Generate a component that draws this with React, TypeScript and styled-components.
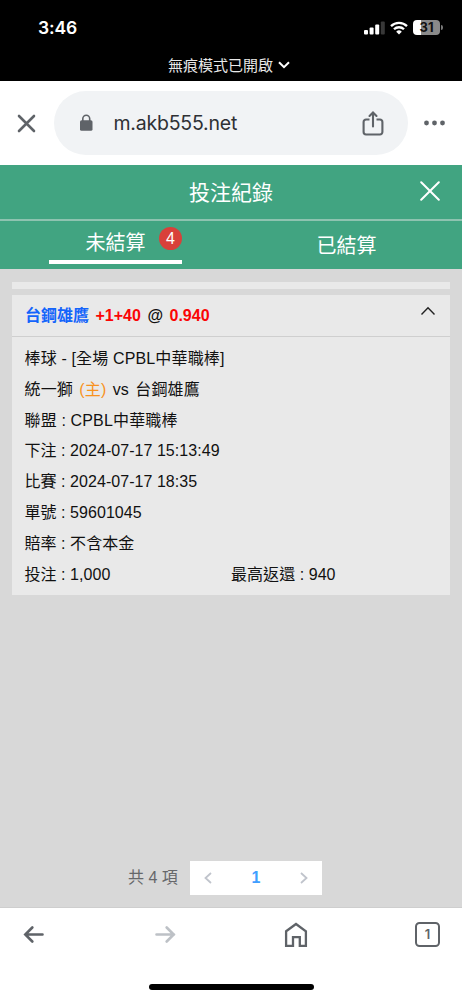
import React from 'react';
import styled, { createGlobalStyle } from 'styled-components';

const GlobalStyle = createGlobalStyle`
  * { box-sizing: border-box; }
  body { margin: 0; background: #fff; }
`;

const cjk = `'Noto Sans CJK TC', sans-serif`;

const Screen = styled.div`
  width: 462px;
  height: 1000px;
  display: flex;
  flex-direction: column;
  overflow: hidden;
  background: #fff;
  font-family: 'Liberation Sans', ${cjk};
`;

const TopArea = styled.header`
  height: 81px;
  flex: none;
  background: #000;
  color: #fff;
  display: flex;
  flex-direction: column;
`;

const StatusBar = styled.div`
  height: 55px;
  padding: 0 19px 0 38px;
  display: flex;
  align-items: center;
  justify-content: space-between;
`;

const Clock = styled.span`
  font: 600 17.5px/24px Inter, sans-serif;
  letter-spacing: -0.1px;
`;

const StatusIcons = styled.div`
  display: flex;
  align-items: center;
  gap: 5px;
`;

const Battery = styled.div`
  display: flex;
  align-items: center;
  gap: 1px;
`;

const BatteryBody = styled.div<{ $level: number }>`
  width: 27px;
  height: 15px;
  border-radius: 4px;
  background: linear-gradient(90deg, #fff ${p => p.$level}%, #8a8a8a ${p => p.$level}%);
  color: #111;
  font: 700 13px/15px Inter, sans-serif;
  text-align: center;
`;

const BatteryTip = styled.div`
  width: 2px;
  height: 5px;
  border-radius: 0 2px 2px 0;
  background: #777;
`;

const Incognito = styled.div`
  height: 20px;
  display: flex;
  align-items: center;
  justify-content: center;
  gap: 5px;
  padding-right: 4px;
  font: 400 15px/20px ${cjk};
  color: #e8e8e8;
`;

const AddressBar = styled.div`
  height: 84px;
  flex: none;
  display: flex;
  align-items: center;
  padding: 0 16px 0 17px;
`;

const AddressPill = styled.div`
  width: 354px;
  height: 64px;
  margin: 0 15px 0 18px;
  padding: 0 24px;
  border-radius: 32px;
  background: #f1f3f5;
  display: flex;
  align-items: center;
`;

const Url = styled.span`
  flex: 1;
  margin-left: 19.5px;
  font: 400 19.5px/28px Inter, sans-serif;
  letter-spacing: -0.22px;
  color: #2e3034;
`;

const TitleBar = styled.div`
  height: 56px;
  flex: none;
  display: grid;
  grid-template-columns: 44px 1fr 44px;
  align-items: center;
  padding: 0 10px 2px;
  background: #41a481;
  border-bottom: 2px solid #8ec3b0;
  color: #fff;
`;

const Title = styled.h1`
  grid-column: 2;
  margin: 0;
  text-align: center;
  font: 400 21px/30px ${cjk};
`;

const CloseButton = styled.button`
  display: flex;
  justify-content: center;
  padding: 0;
  border: 0;
  background: none;
`;

const Tabs = styled.nav`
  height: 48px;
  flex: none;
  display: grid;
  grid-template-columns: 231px 231px;
  justify-items: center;
  background: #41a481;
`;

const Tab = styled.div<{ $active?: boolean }>`
  position: relative;
  width: 133px;
  height: ${p => (p.$active ? 43 : 48)}px;
  border-bottom: ${p => (p.$active ? '4px solid #fff' : '0')};
  color: #fff;
  font: 400 20px/${p => (p.$active ? 41 : 47)}px ${cjk};
  text-align: center;
`;

const Badge = styled.span`
  position: absolute;
  top: 5.5px;
  right: 0;
  width: 23px;
  height: 23px;
  border-radius: 50%;
  background: #d9403a;
  font: 400 16px/23px 'Liberation Sans', sans-serif;
`;

const Content = styled.main`
  height: 639px;
  flex: none;
  padding: 13px 12px 0;
  background: #d8d8d8;
  border-bottom: 1px solid #cecece;
  display: flex;
  flex-direction: column;
`;

const Strip = styled.div`
  height: 7px;
  margin-bottom: 6px;
  background: #e9e9e9;
`;

const Card = styled.section`
  height: 300px;
  background: #e9e9e9;
  color: #111;
`;

const CardHeader = styled.div`
  height: 41.5px;
  padding: 0 14px 0 13px;
  display: flex;
  justify-content: space-between;
  border-bottom: 1px solid #cfcfcf;
`;

const BetSummary = styled.div`
  display: flex;
  align-items: baseline;
  gap: 6.5px;
  font-size: 16px;
  font-weight: 700;
  line-height: 38px;
  color: #fb0505;
`;

const Team = styled.span`
  font: 700 16px/38px ${cjk};
  color: #1464fb;
`;

const At = styled.span`
  color: #111;
`;

const Details = styled.div`
  padding: 7.5px 12.5px 0;
  font-size: 16px;
`;

const Row = styled.div<{ $loose?: boolean }>`
  height: 30.8px;
  line-height: 30.8px;
  display: grid;
  grid-template-columns: 206.5px 1fr;
  white-space: pre;
  letter-spacing: ${p => (p.$loose ? 0.15 : 0.05)}px;
`;

const Line = styled.span<{ $wide?: boolean }>`
  grid-column: ${p => (p.$wide ? '1 / 3' : 'auto')};
`;

const Matchup = styled(Line)`
  display: flex;
  gap: 6.3px;
`;

const HomeMark = styled.span`
  color: #f8921e;
`;

const Pagination = styled.div`
  margin-top: auto;
  padding-bottom: 12px;
  display: flex;
  align-items: center;
  padding-left: 116px;
`;

const Total = styled.span`
  width: 62px;
  font: 400 16px/34px 'Liberation Sans', ${cjk};
  color: #66676a;
`;

const Pager = styled.div`
  width: 132px;
  height: 34px;
  padding: 0 14px;
  display: flex;
  align-items: center;
  justify-content: space-between;
  background: #fff;
`;

const PageNumber = styled.span`
  color: #409eff;
  font-size: 16px;
  font-weight: 700;
`;

const BottomBar = styled.footer`
  flex: 1;
  display: flex;
  flex-direction: column;
  align-items: center;
  justify-content: space-between;
  padding-bottom: 10px;
`;

const NavRow = styled.div`
  width: 100%;
  height: 53px;
  padding: 0 22px 0 23px;
  display: grid;
  grid-template-columns: 131px 130px 131px 25px;
  align-items: center;
`;

const TabCount = styled.div`
  width: 25px;
  height: 25px;
  border: 2px solid #5f6368;
  border-radius: 4.5px;
  color: #5f6368;
  font: 600 13px/21px Inter, sans-serif;
  text-align: center;
`;

const HomeIndicator = styled.div`
  width: 165px;
  height: 6px;
  border-radius: 3px;
  background: #000;
`;

const Signal = () => (
  <svg width="21" height="14" viewBox="0 0 21 14" fill="#fff">
    <rect x="0" y="9" width="4" height="4.5" rx="1" />
    <rect x="5.6" y="6.5" width="4" height="7" rx="1" />
    <rect x="11.2" y="3.5" width="4" height="10" rx="1" />
    <rect x="16.8" y="0.5" width="4" height="13" rx="1" fill="#383838" />
  </svg>
);

const Wifi = () => (
  <svg width="18" height="14" viewBox="0 0 18 14" fill="none" stroke="#fff" strokeWidth="2.3">
    <path d="M1 5.1a11.4 11.4 0 0 1 16 0" />
    <path d="M4 8.3a7.1 7.1 0 0 1 10 0" />
    <path d="M9 13.5 6.2 10.7a4 4 0 0 1 5.6 0z" fill="#fff" stroke="none" />
  </svg>
);

const Chevron = () => (
  <svg width="12" height="8" viewBox="0 0 12 8" fill="none" stroke="#fff" strokeWidth="2">
    <path d="M1 1.2l5 5 5-5" />
  </svg>
);

const StopIcon = () => (
  <svg width="19" height="19" viewBox="0 0 19 19" stroke="#5f6368" strokeWidth="2.6" strokeLinecap="round">
    <path d="M2 2l15 15M17 2L2 17" />
  </svg>
);

const LockIcon = () => (
  <svg width="16" height="18" viewBox="0 0 16 18">
    <rect x="2" y="6.2" width="12.5" height="10.6" rx="1.6" fill="#5f6368" />
    <path d="M4.8 7V4.7a3.45 3.45 0 0 1 6.9 0V7" fill="none" stroke="#5f6368" strokeWidth="1.6" />
  </svg>
);

const ShareIcon = () => (
  <svg width="22" height="26" viewBox="0 0 22 26" fill="none" stroke="#5f6368" strokeWidth="2.1">
    <path d="M7.5 9.5H4a2.4 2.4 0 0 0-2.4 2.4v10.2A2.4 2.4 0 0 0 4 24.5h14a2.4 2.4 0 0 0 2.4-2.4V11.9A2.4 2.4 0 0 0 18 9.5h-3.5" />
    <path d="M11 16.5V3M7.5 6L11 2.5 14.5 6" strokeLinecap="round" />
  </svg>
);

const MoreIcon = () => (
  <svg width="22" height="6" viewBox="0 0 22 6" fill="#5f6368">
    <circle cx="3.5" cy="3" r="2.4" />
    <circle cx="11.5" cy="3" r="2.4" />
    <circle cx="19.5" cy="3" r="2.4" />
  </svg>
);

const CloseIcon = () => (
  <svg width="20" height="20" viewBox="0 0 20 20" stroke="#fff" strokeWidth="2" strokeLinecap="round">
    <path d="M1.2 1.2l17.6 17.6M18.8 1.2L1.2 18.8" />
  </svg>
);

const CollapseIcon = () => (
  <svg width="16" height="33" viewBox="0 0 16 33" fill="none" stroke="#222" strokeWidth="1.4">
    <path d="M1.5 19.5L8 12.7l6.5 6.8" />
  </svg>
);

const PageArrow = ({ next = false }: { next?: boolean }) => (
  <svg width="8" height="12" viewBox="0 0 8 12" fill="none" stroke="#c0c4cc" strokeWidth="1.8">
    <path d={next ? 'M1 1l5.5 5L1 11' : 'M7 1L1.5 6 7 11'} />
  </svg>
);

const NavArrow = ({ forward = false }: { forward?: boolean }) => (
  <svg
    width="22" height="18" viewBox="0 0 22 18" fill="none"
    stroke={forward ? '#bdc1c6' : '#5f6368'} strokeWidth="2.6" strokeLinecap="round"
  >
    <path d={forward ? 'M2.5 8.5h17.5M12.7 1.5l7 7-7 7' : 'M19.5 8.5H2.5M9.3 1.5l-7 7 7 7'} />
  </svg>
);

const HomeIcon = () => (
  <svg width="24" height="26" viewBox="0 0 24 26" fill="none" stroke="#5f6368" strokeWidth="2.3">
    <path d="M2.1 9.3L12 2l9.9 7.3V23.9h-6.100v-8.700H9v8.700H2.100z" />
  </svg>
);

const info = [
  '下注 : 2024-07-17 15:13:49',
  '比賽 : 2024-07-17 18:35',
  '單號 : 59601045',
  '賠率 : 不含本金',
];

export default function App() {
  return (
    <Screen>
      <GlobalStyle />
      <TopArea>
        <StatusBar>
          <Clock>3:46</Clock>
          <StatusIcons>
            <Signal />
            <Wifi />
            <Battery>
              <BatteryBody $level={31}>31</BatteryBody>
              <BatteryTip />
            </Battery>
          </StatusIcons>
        </StatusBar>
        <Incognito>無痕模式已開啟<Chevron /></Incognito>
      </TopArea>
      <AddressBar>
        <StopIcon />
        <AddressPill>
          <LockIcon />
          <Url>m.akb555.net</Url>
          <ShareIcon />
        </AddressPill>
        <MoreIcon />
      </AddressBar>
      <TitleBar>
        <Title>投注紀錄</Title>
        <CloseButton aria-label="關閉"><CloseIcon /></CloseButton>
      </TitleBar>
      <Tabs>
        <Tab $active>未結算<Badge>4</Badge></Tab>
        <Tab>已結算</Tab>
      </Tabs>
      <Content>
        <Strip />
        <Card>
          <CardHeader>
            <BetSummary>
              <Team>台鋼雄鷹</Team>
              <span>+1+40</span>
              <At>@</At>
              <span>0.940</span>
            </BetSummary>
            <CollapseIcon />
          </CardHeader>
          <Details>
            <Row $loose><Line $wide>棒球 - [全場 CPBL中華職棒]</Line></Row>
            <Row $loose>
              <Matchup $wide>
                <span>統一獅</span>
                <HomeMark>(主)</HomeMark>
                <span>vs</span>
                <span>台鋼雄鷹</span>
              </Matchup>
            </Row>
            <Row $loose><Line $wide>聯盟 : CPBL中華職棒</Line></Row>
            {info.map(text => <Row key={text}><Line $wide>{text}</Line></Row>)}
            <Row><Line>投注 : 1,000</Line><Line>最高返還 : 940</Line></Row>
          </Details>
        </Card>
        <Pagination>
          <Total>共 4 項</Total>
          <Pager>
            <PageArrow />
            <PageNumber>1</PageNumber>
            <PageArrow next />
          </Pager>
        </Pagination>
      </Content>
      <BottomBar>
        <NavRow>
          <NavArrow />
          <NavArrow forward />
          <HomeIcon />
          <TabCount>1</TabCount>
        </NavRow>
        <HomeIndicator />
      </BottomBar>
    </Screen>
  );
}
